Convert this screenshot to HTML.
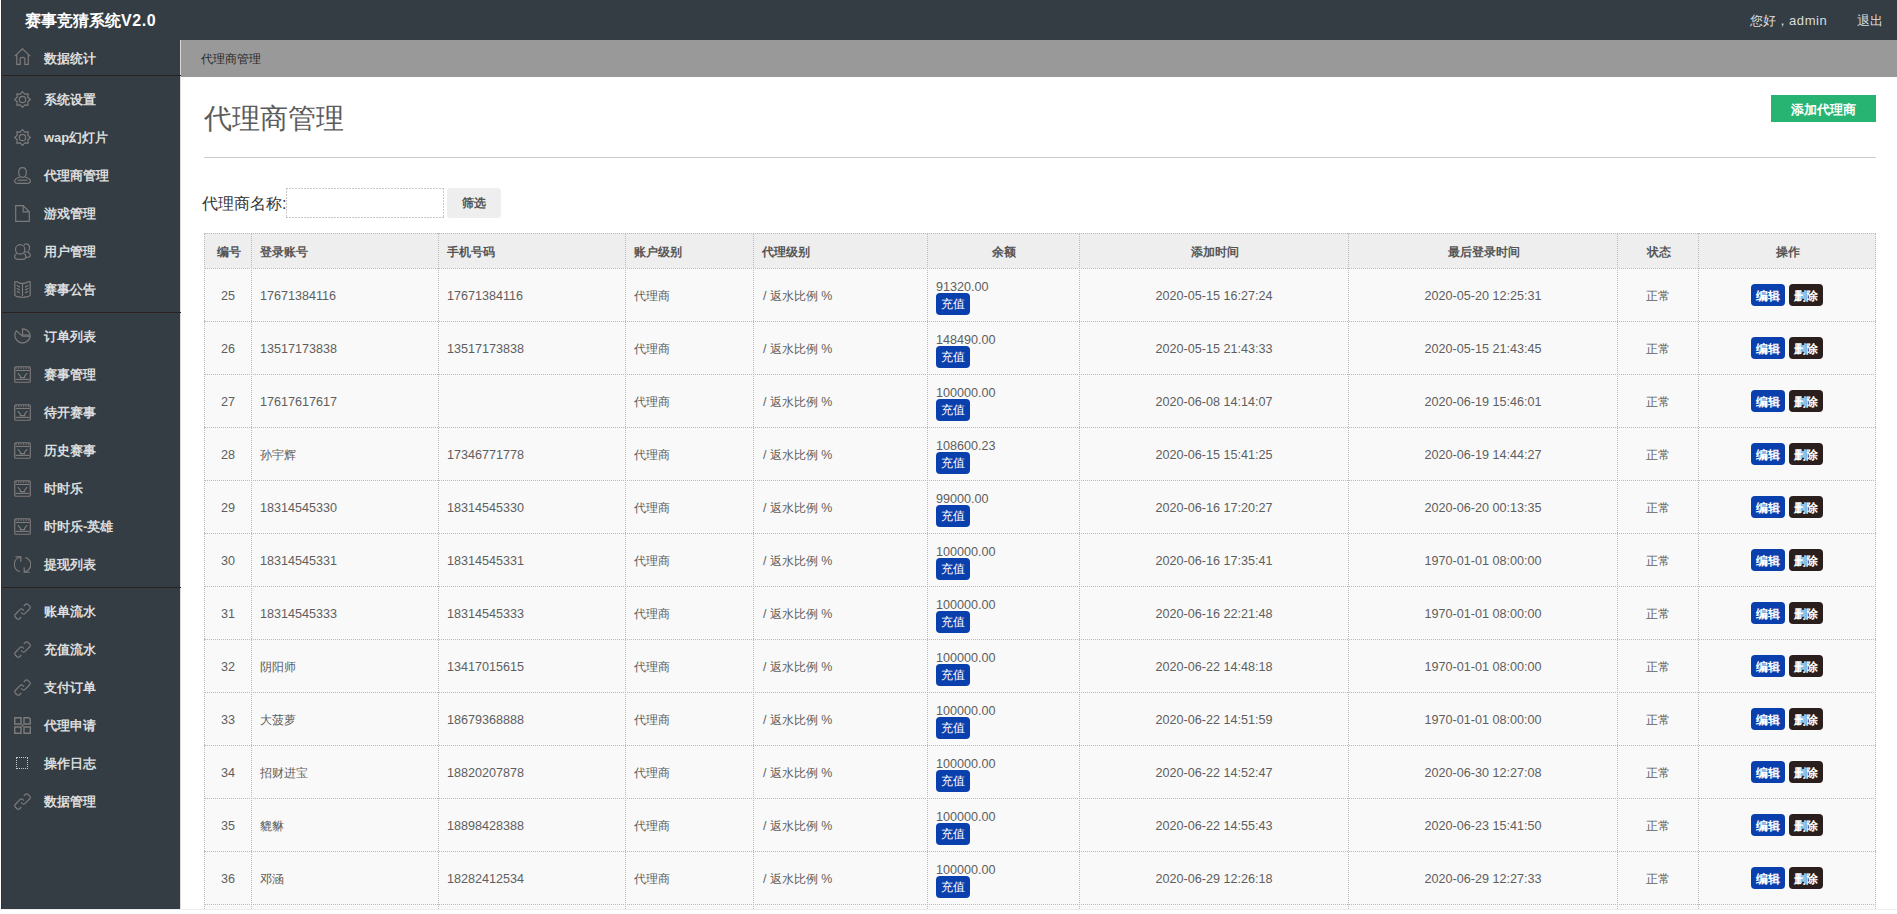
<!DOCTYPE html>
<html><head><meta charset="utf-8">
<style>
*{box-sizing:border-box}
html,body{margin:0;padding:0}
body{width:1897px;height:914px;overflow:hidden;background:#fff;position:relative;font-family:"Liberation Sans",sans-serif;}
#frame{position:absolute;left:0;top:0;width:1897px;height:909px;overflow:hidden;background:#fff}
#leftwhite{position:absolute;left:0;top:0;width:1px;height:914px;background:#fff;z-index:9}
#leftdark{position:absolute;left:1px;top:0;width:1px;height:909px;background:#2a3338;z-index:9}
#bottomline{position:absolute;left:0;top:909px;width:1897px;height:1px;background:#eee}
#top{position:absolute;left:0;top:0;width:1897px;height:40px;background:#343d44}
#logo{position:absolute;left:25px;top:10px;font-size:16px;font-weight:bold;color:#fff;line-height:22px;white-space:nowrap}
#hello{position:absolute;left:1750px;top:12px;font-size:13px;color:#ddd;line-height:18px;white-space:nowrap}
#logout{position:absolute;left:1857px;top:12px;font-size:13px;color:#ddd;line-height:18px;white-space:nowrap}
#side{position:absolute;left:0;top:40px;width:180px;height:869px;background:#343d44}
#side .sep{position:absolute;left:0;width:181px;height:1px;background:#2b2220;z-index:3}
#side .it{position:absolute;left:0;width:179px;height:38px}
#side .it span{position:absolute;left:44px;top:11px;font-size:13px;font-weight:bold;color:#ddd;line-height:18px;white-space:nowrap}
#side .it svg{position:absolute;width:17px;height:17px}
#side .dotsq{position:absolute;left:16px;top:13px;width:12px;height:12px;border:1px dotted #c8c8c8}
#vline{position:absolute;left:180px;top:40px;width:1px;height:869px;background:#dedad6;z-index:2}
#crumb{position:absolute;left:181px;top:40px;width:1716px;height:37px;background:#999}
#crumb span{position:absolute;left:20px;top:11px;font-size:12px;color:#2b2b2b;line-height:17px;white-space:nowrap}
#main{position:absolute;left:181px;top:77px;width:1716px;height:832px;background:#fff}
#title{position:absolute;left:23px;top:24px;font-size:28px;font-weight:350;color:#5c5c5c;line-height:36px;white-space:nowrap}
#hr{position:absolute;left:23px;top:80px;width:1672px;height:1px;background:#ccc}
#addbtn{position:absolute;left:1590px;top:18px;width:105px;height:27px;background:#27b473;color:#fff;font-size:13px;font-weight:bold;line-height:29px;text-align:center}
#flabel{position:absolute;left:21px;top:116px;font-size:16px;color:#333;line-height:22px;white-space:nowrap}
#finput{position:absolute;left:105px;top:111px;width:158px;height:30px;background:#fff}
#finput i{position:absolute;display:block}
#finput .bt,#finput .bb{left:0;width:158px;height:1px;background:repeating-linear-gradient(90deg,#c8c8c8 0 2px,transparent 2px 3px)}
#finput .bt{top:0}#finput .bb{bottom:0}
#finput .bl,#finput .br{top:0;width:1px;height:30px;background:repeating-linear-gradient(180deg,#c8c8c8 0 2px,transparent 2px 3px)}
#finput .bl{left:0}#finput .br{right:0}
#fbtn{position:absolute;left:266px;top:111px;width:54px;height:30px;background:#eee;border-radius:3px;color:#555;font-size:12px;font-weight:bold;line-height:30px;text-align:center}
#tbl{position:absolute;left:23px;top:156px;width:1672px;height:700px}
#tbl .hrow{position:absolute;left:0;width:1672px;background:#eee}
#tbl .brow{position:absolute;left:0;width:1672px;background:#f9f9f9}
#tbl .th,#tbl .td{position:absolute;white-space:nowrap;font-size:12px;color:#555}
#tbl .td{color:#5e5e5e}
#tbl .th{font-weight:bold;line-height:38px;padding-left:1px}
#tbl .td{line-height:56px;font-size:12.6px}
#tbl .cj{font-size:12px}
#tbl .l{padding-left:9px}
#tbl .c{text-align:center}
#tbl .bal{padding-left:9px}
#tbl .amt{position:absolute;left:9px;top:11px;line-height:17px}
#tbl .cz{position:absolute;left:9px;top:25px;width:34px;height:22px;background:#0a3fae;border-radius:4px;color:#fff;font-size:12px;font-weight:500;line-height:22px;text-align:center}
#tbl .ops{line-height:52px}
#tbl .ops span{display:inline-block;vertical-align:middle;width:34px;height:22px;border-radius:4px;color:#fff;font-size:12px;font-weight:bold;line-height:24px;text-align:center;margin:0 2px}
#tbl .eb{background:#0a3fae}
#tbl .db{background:#2a1f1d}
#tbl .hl{position:absolute;left:0;height:1px;border-top:1px dotted #bdb9b6}
#tbl .vl{position:absolute;top:0;width:1px;height:700px;border-left:1px dotted #bdb9b6}

#tbl .fs{font-size:12.45px;padding-left:10px}

</style></head>
<body>
<div id="frame">
 <div id="top"><div id="logo">赛事竞猜系统<span style="letter-spacing:0.6px">V2.0</span></div><div id="hello">您好，<span style="letter-spacing:0.6px">admin</span></div><div id="logout">退出</div></div>
 <div id="side">
  <div class="sep" style="top:35px"></div>
  <div class="sep" style="top:272px"></div>
  <div class="sep" style="top:547px"></div>
  <div class="it" style="top:-1px"><svg style="left:14px;top:9px" viewBox="0 0 16 16" fill="none" stroke="#7e7b7c" stroke-width="1.1"><path d="M0.8 7.6 L8 0.8 L15.2 7.6"/><path d="M2.6 6.2 V15.4 H5.8 V10.2 Q5.8 8.8 8 8.8 Q10.2 8.8 10.2 10.2 V15.4 H13.4 V6.2"/></svg><span>数据统计</span></div>
  <div class="it" style="top:40px"><svg style="left:14px;top:11px" viewBox="0 0 16 16" fill="none" stroke="#7e7b7c" stroke-width="1.1"><path d="M8 0.6 L10.2 3 L13.3 2.7 L13 5.8 L15.4 8 L13 10.2 L13.3 13.3 L10.2 13 L8 15.4 L5.8 13 L2.7 13.3 L3 10.2 L0.6 8 L3 5.8 L2.7 2.7 L5.8 3 Z"/><circle cx="8" cy="8" r="3"/></svg><span>系统设置</span></div>
  <div class="it" style="top:78px"><svg style="left:14px;top:11px" viewBox="0 0 16 16" fill="none" stroke="#7e7b7c" stroke-width="1.1"><path d="M8 0.6 L10.2 3 L13.3 2.7 L13 5.8 L15.4 8 L13 10.2 L13.3 13.3 L10.2 13 L8 15.4 L5.8 13 L2.7 13.3 L3 10.2 L0.6 8 L3 5.8 L2.7 2.7 L5.8 3 Z"/><circle cx="8" cy="8" r="3"/></svg><span>wap幻灯片</span></div>
  <div class="it" style="top:116px"><svg style="left:14px;top:11px" viewBox="0 0 16 16" fill="none" stroke="#7e7b7c" stroke-width="1.1"><path d="M8 0.6 C5.6 0.6 4.4 2.5 4.4 5 C4.4 7.6 5.8 9.8 8 9.8 C10.2 9.8 11.6 7.6 11.6 5 C11.6 2.5 10.4 0.6 8 0.6 Z"/><path d="M5.4 9.6 C2.6 10.2 0.6 11.6 0.6 13.2 C0.6 14.6 2 15.4 4 15.4 H12 C14 15.4 15.4 14.6 15.4 13.2 C15.4 11.6 13.4 10.2 10.6 9.6"/><path d="M3.5 12.4 H12.5"/></svg><span>代理商管理</span></div>
  <div class="it" style="top:154px"><svg style="left:14px;top:11px" viewBox="0 0 16 16" fill="none" stroke="#7e7b7c" stroke-width="1.1"><path d="M1.6 0.6 H8.6 L14.4 6.4 V15.4 H1.6 Z"/><path d="M8.6 0.6 V6.4 H14.4"/></svg><span>游戏管理</span></div>
  <div class="it" style="top:192px"><svg style="left:14px;top:11px" viewBox="0 0 16 16" fill="none" stroke="#7e7b7c" stroke-width="1.1"><circle cx="5.8" cy="6" r="4.4"/><path d="M2.8 9.6 C1.4 10.4 0.6 11.6 0.6 13 C0.6 14.6 2 15.4 4 15.4 H8.4 C10.4 15.4 11.2 14.4 11.2 13 C11.2 11.6 10.4 10.4 9 9.6"/><path d="M9.4 2.2 C9.9 1.2 10.8 0.8 11.6 0.8 C13.3 0.8 14.6 2.4 14.6 4.6 C14.6 6.8 13.3 8.6 11.6 8.6 C10.8 8.6 10.2 8.3 9.8 7.8"/><path d="M13.2 8.8 C14.6 9.6 15.4 10.4 15.4 11.6 C15.4 12.8 14.6 13.6 12.4 13.6 H11"/></svg><span>用户管理</span></div>
  <div class="it" style="top:230px"><svg style="left:14px;top:11px" viewBox="0 0 16 16" fill="none" stroke="#7e7b7c" stroke-width="1.1"><path d="M0.8 0.8 H3.2 L5.6 2.2 H10.4 L12.8 0.8 H15.2 V13.6 L12.8 15 H10.4 L8.8 15.8 H7.2 L5.6 15 H3.2 L0.8 13.6 Z"/><path d="M8 2.6 V14.8"/><path d="M2.6 4 L5.6 5.8 M2.6 6.8 L5.6 8.6 M2.6 9.6 L5.6 11.4 M13.4 4 L10.4 5.8 M13.4 6.8 L10.4 8.6 M13.4 9.6 L10.4 11.4"/></svg><span>赛事公告</span></div>
  <div class="it" style="top:277px"><svg style="left:14px;top:11px" viewBox="0 0 16 16" fill="none" stroke="#7e7b7c" stroke-width="1.1"><path d="M2.2 2.6 A7.2 7.2 0 1 0 15.2 7.6 H8 Z"/><path d="M8 0.8 A7.2 7.2 0 0 1 15.2 6.6 H8 Z"/></svg><span>订单列表</span></div>
  <div class="it" style="top:315px"><svg style="left:14px;top:11px" viewBox="0 0 16 16" fill="none" stroke="#7e7b7c" stroke-width="1.1"><rect x="0.7" y="0.7" width="14.6" height="14.6" rx="1"/><path d="M1.5 4.2 H14.5"/><path d="M2 1.2 V2.6 M4.3 1.2 V2.6 M6.6 1.2 V2.6 M9 1.2 V2.6 M11.3 1.2 V2.6 M13.6 1.2 V2.6"/><path d="M3.6 6.6 L6 9.6 V11 H10 V9.6 L12.4 6.6"/><path d="M1.5 12.6 H14.5"/></svg><span>赛事管理</span></div>
  <div class="it" style="top:353px"><svg style="left:14px;top:11px" viewBox="0 0 16 16" fill="none" stroke="#7e7b7c" stroke-width="1.1"><rect x="0.7" y="0.7" width="14.6" height="14.6" rx="1"/><path d="M1.5 4.2 H14.5"/><path d="M2 1.2 V2.6 M4.3 1.2 V2.6 M6.6 1.2 V2.6 M9 1.2 V2.6 M11.3 1.2 V2.6 M13.6 1.2 V2.6"/><path d="M3.6 6.6 L6 9.6 V11 H10 V9.6 L12.4 6.6"/><path d="M1.5 12.6 H14.5"/></svg><span>待开赛事</span></div>
  <div class="it" style="top:391px"><svg style="left:14px;top:11px" viewBox="0 0 16 16" fill="none" stroke="#7e7b7c" stroke-width="1.1"><rect x="0.7" y="0.7" width="14.6" height="14.6" rx="1"/><path d="M1.5 4.2 H14.5"/><path d="M2 1.2 V2.6 M4.3 1.2 V2.6 M6.6 1.2 V2.6 M9 1.2 V2.6 M11.3 1.2 V2.6 M13.6 1.2 V2.6"/><path d="M3.6 6.6 L6 9.6 V11 H10 V9.6 L12.4 6.6"/><path d="M1.5 12.6 H14.5"/></svg><span>历史赛事</span></div>
  <div class="it" style="top:429px"><svg style="left:14px;top:11px" viewBox="0 0 16 16" fill="none" stroke="#7e7b7c" stroke-width="1.1"><rect x="0.7" y="0.7" width="14.6" height="14.6" rx="1"/><path d="M1.5 4.2 H14.5"/><path d="M2 1.2 V2.6 M4.3 1.2 V2.6 M6.6 1.2 V2.6 M9 1.2 V2.6 M11.3 1.2 V2.6 M13.6 1.2 V2.6"/><path d="M3.6 6.6 L6 9.6 V11 H10 V9.6 L12.4 6.6"/><path d="M1.5 12.6 H14.5"/></svg><span>时时乐</span></div>
  <div class="it" style="top:467px"><svg style="left:14px;top:11px" viewBox="0 0 16 16" fill="none" stroke="#7e7b7c" stroke-width="1.1"><rect x="0.7" y="0.7" width="14.6" height="14.6" rx="1"/><path d="M1.5 4.2 H14.5"/><path d="M2 1.2 V2.6 M4.3 1.2 V2.6 M6.6 1.2 V2.6 M9 1.2 V2.6 M11.3 1.2 V2.6 M13.6 1.2 V2.6"/><path d="M3.6 6.6 L6 9.6 V11 H10 V9.6 L12.4 6.6"/><path d="M1.5 12.6 H14.5"/></svg><span>时时乐-英雄</span></div>
  <div class="it" style="top:505px"><svg style="left:14px;top:11px" viewBox="0 0 16 16" fill="none" stroke="#7e7b7c" stroke-width="1.1"><path d="M10.6 1.4 A6.8 6.8 0 0 1 9.4 14.8"/><path d="M5.6 14.6 A6.8 6.8 0 0 1 6.4 1.2"/><path d="M1.4 0.9 H6.4 V5.4"/><path d="M14.6 15.1 H9.6 V10.6"/></svg><span>提现列表</span></div>
  <div class="it" style="top:552px"><svg style="left:14px;top:11px" viewBox="0 0 16 16" fill="none" stroke="#7e7b7c" stroke-width="1.1"><path d="M9.2 2.8 L10.6 1.4 Q11.8 0.4 13 1.2 L14.8 3 Q15.8 4.2 14.8 5.4 L10.4 9.8 Q9.2 11 7.8 10 L6.6 8.8"/><path d="M6.8 13.2 L5.2 14.8 Q4 15.8 2.8 14.8 L1.2 13.2 Q0.2 12 1.2 10.8 L5.6 6.2 Q6.8 5 8.2 6 L9.4 7.2"/></svg><span>账单流水</span></div>
  <div class="it" style="top:590px"><svg style="left:14px;top:11px" viewBox="0 0 16 16" fill="none" stroke="#7e7b7c" stroke-width="1.1"><path d="M9.2 2.8 L10.6 1.4 Q11.8 0.4 13 1.2 L14.8 3 Q15.8 4.2 14.8 5.4 L10.4 9.8 Q9.2 11 7.8 10 L6.6 8.8"/><path d="M6.8 13.2 L5.2 14.8 Q4 15.8 2.8 14.8 L1.2 13.2 Q0.2 12 1.2 10.8 L5.6 6.2 Q6.8 5 8.2 6 L9.4 7.2"/></svg><span>充值流水</span></div>
  <div class="it" style="top:628px"><svg style="left:14px;top:11px" viewBox="0 0 16 16" fill="none" stroke="#7e7b7c" stroke-width="1.1"><path d="M9.2 2.8 L10.6 1.4 Q11.8 0.4 13 1.2 L14.8 3 Q15.8 4.2 14.8 5.4 L10.4 9.8 Q9.2 11 7.8 10 L6.6 8.8"/><path d="M6.8 13.2 L5.2 14.8 Q4 15.8 2.8 14.8 L1.2 13.2 Q0.2 12 1.2 10.8 L5.6 6.2 Q6.8 5 8.2 6 L9.4 7.2"/></svg><span>支付订单</span></div>
  <div class="it" style="top:666px"><svg style="left:14px;top:11px" viewBox="0 0 16 16" fill="none" stroke="#7e7b7c" stroke-width="1.1"><path d="M0.7 0.7 H6.6 V6.6 H0.7 Z M9.4 0.7 H14 L15.3 2 V6.6 H9.4 Z M0.7 9.4 H6.6 V15.3 H0.7 Z M9.4 9.4 H15.3 V15.3 H9.4 Z" stroke-width="1.3"/><path d="M8 7 V9 M7 8 H9" stroke-width="0.9"/></svg><span>代理申请</span></div>
  <div class="it" style="top:704px"><div class="dotsq"></div><span>操作日志</span></div>
  <div class="it" style="top:742px"><svg style="left:14px;top:11px" viewBox="0 0 16 16" fill="none" stroke="#7e7b7c" stroke-width="1.1"><path d="M9.2 2.8 L10.6 1.4 Q11.8 0.4 13 1.2 L14.8 3 Q15.8 4.2 14.8 5.4 L10.4 9.8 Q9.2 11 7.8 10 L6.6 8.8"/><path d="M6.8 13.2 L5.2 14.8 Q4 15.8 2.8 14.8 L1.2 13.2 Q0.2 12 1.2 10.8 L5.6 6.2 Q6.8 5 8.2 6 L9.4 7.2"/></svg><span>数据管理</span></div>
 </div>
 <div id="vline"></div>
 <div id="crumb"><span>代理商管理</span></div>
 <div id="main">
  <div id="title">代理商管理</div>
  <div id="hr"></div>
  <div id="addbtn">添加代理商</div>
  <div id="flabel">代理商名称:</div><div id="finput"><i class="bt"></i><i class="bb"></i><i class="bl"></i><i class="br"></i></div><div id="fbtn">筛选</div>
  <div id="tbl">
   <div class="hrow" style="top:0;height:36px"></div>
   <div class="th c" style="left:0px;top:0;width:48px;height:36px">编号</div>
   <div class="th l" style="left:47px;top:0;width:188px;height:36px">登录账号</div>
   <div class="th l" style="left:234px;top:0;width:188px;height:36px">手机号码</div>
   <div class="th l" style="left:421px;top:0;width:129px;height:36px">账户级别</div>
   <div class="th l" style="left:549px;top:0;width:175px;height:36px">代理级别</div>
   <div class="th c" style="left:723px;top:0;width:153px;height:36px">余额</div>
   <div class="th c" style="left:875px;top:0;width:270px;height:36px">添加时间</div>
   <div class="th c" style="left:1144px;top:0;width:270px;height:36px">最后登录时间</div>
   <div class="th c" style="left:1413px;top:0;width:82px;height:36px">状态</div>
   <div class="th c" style="left:1494px;top:0;width:178px;height:36px">操作</div>
   <div class="brow" style="top:35px;height:54px"></div>
   <div class="td c" style="left:0px;top:35px;width:48px;height:54px">25</div>
   <div class="td l" style="left:47px;top:35px;width:188px;height:54px">17671384116</div>
   <div class="td l" style="left:234px;top:35px;width:188px;height:54px">17671384116</div>
   <div class="td l cj" style="left:421px;top:35px;width:129px;height:54px">代理商</div>
   <div class="td l fs" style="left:549px;top:35px;width:175px;height:54px">/ 返水比例 %</div>
   <div class="td bal" style="left:723px;top:35px;width:153px;height:54px"><div class="amt">91320.00</div><div class="cz">充值</div></div>
   <div class="td c" style="left:875px;top:35px;width:270px;height:54px">2020-05-15 16:27:24</div>
   <div class="td c" style="left:1144px;top:35px;width:270px;height:54px">2020-05-20 12:25:31</div>
   <div class="td c cj" style="left:1413px;top:35px;width:82px;height:54px">正常</div>
   <div class="td c ops" style="left:1494px;top:35px;width:178px;height:54px"><span class="eb">编辑</span><span class="db">删除</span></div>
   <div class="brow" style="top:88px;height:54px"></div>
   <div class="td c" style="left:0px;top:88px;width:48px;height:54px">26</div>
   <div class="td l" style="left:47px;top:88px;width:188px;height:54px">13517173838</div>
   <div class="td l" style="left:234px;top:88px;width:188px;height:54px">13517173838</div>
   <div class="td l cj" style="left:421px;top:88px;width:129px;height:54px">代理商</div>
   <div class="td l fs" style="left:549px;top:88px;width:175px;height:54px">/ 返水比例 %</div>
   <div class="td bal" style="left:723px;top:88px;width:153px;height:54px"><div class="amt">148490.00</div><div class="cz">充值</div></div>
   <div class="td c" style="left:875px;top:88px;width:270px;height:54px">2020-05-15 21:43:33</div>
   <div class="td c" style="left:1144px;top:88px;width:270px;height:54px">2020-05-15 21:43:45</div>
   <div class="td c cj" style="left:1413px;top:88px;width:82px;height:54px">正常</div>
   <div class="td c ops" style="left:1494px;top:88px;width:178px;height:54px"><span class="eb">编辑</span><span class="db">删除</span></div>
   <div class="brow" style="top:141px;height:54px"></div>
   <div class="td c" style="left:0px;top:141px;width:48px;height:54px">27</div>
   <div class="td l" style="left:47px;top:141px;width:188px;height:54px">17617617617</div>
   <div class="td l" style="left:234px;top:141px;width:188px;height:54px"></div>
   <div class="td l cj" style="left:421px;top:141px;width:129px;height:54px">代理商</div>
   <div class="td l fs" style="left:549px;top:141px;width:175px;height:54px">/ 返水比例 %</div>
   <div class="td bal" style="left:723px;top:141px;width:153px;height:54px"><div class="amt">100000.00</div><div class="cz">充值</div></div>
   <div class="td c" style="left:875px;top:141px;width:270px;height:54px">2020-06-08 14:14:07</div>
   <div class="td c" style="left:1144px;top:141px;width:270px;height:54px">2020-06-19 15:46:01</div>
   <div class="td c cj" style="left:1413px;top:141px;width:82px;height:54px">正常</div>
   <div class="td c ops" style="left:1494px;top:141px;width:178px;height:54px"><span class="eb">编辑</span><span class="db">删除</span></div>
   <div class="brow" style="top:194px;height:54px"></div>
   <div class="td c" style="left:0px;top:194px;width:48px;height:54px">28</div>
   <div class="td l cj" style="left:47px;top:194px;width:188px;height:54px">孙宇辉</div>
   <div class="td l" style="left:234px;top:194px;width:188px;height:54px">17346771778</div>
   <div class="td l cj" style="left:421px;top:194px;width:129px;height:54px">代理商</div>
   <div class="td l fs" style="left:549px;top:194px;width:175px;height:54px">/ 返水比例 %</div>
   <div class="td bal" style="left:723px;top:194px;width:153px;height:54px"><div class="amt">108600.23</div><div class="cz">充值</div></div>
   <div class="td c" style="left:875px;top:194px;width:270px;height:54px">2020-06-15 15:41:25</div>
   <div class="td c" style="left:1144px;top:194px;width:270px;height:54px">2020-06-19 14:44:27</div>
   <div class="td c cj" style="left:1413px;top:194px;width:82px;height:54px">正常</div>
   <div class="td c ops" style="left:1494px;top:194px;width:178px;height:54px"><span class="eb">编辑</span><span class="db">删除</span></div>
   <div class="brow" style="top:247px;height:54px"></div>
   <div class="td c" style="left:0px;top:247px;width:48px;height:54px">29</div>
   <div class="td l" style="left:47px;top:247px;width:188px;height:54px">18314545330</div>
   <div class="td l" style="left:234px;top:247px;width:188px;height:54px">18314545330</div>
   <div class="td l cj" style="left:421px;top:247px;width:129px;height:54px">代理商</div>
   <div class="td l fs" style="left:549px;top:247px;width:175px;height:54px">/ 返水比例 %</div>
   <div class="td bal" style="left:723px;top:247px;width:153px;height:54px"><div class="amt">99000.00</div><div class="cz">充值</div></div>
   <div class="td c" style="left:875px;top:247px;width:270px;height:54px">2020-06-16 17:20:27</div>
   <div class="td c" style="left:1144px;top:247px;width:270px;height:54px">2020-06-20 00:13:35</div>
   <div class="td c cj" style="left:1413px;top:247px;width:82px;height:54px">正常</div>
   <div class="td c ops" style="left:1494px;top:247px;width:178px;height:54px"><span class="eb">编辑</span><span class="db">删除</span></div>
   <div class="brow" style="top:300px;height:54px"></div>
   <div class="td c" style="left:0px;top:300px;width:48px;height:54px">30</div>
   <div class="td l" style="left:47px;top:300px;width:188px;height:54px">18314545331</div>
   <div class="td l" style="left:234px;top:300px;width:188px;height:54px">18314545331</div>
   <div class="td l cj" style="left:421px;top:300px;width:129px;height:54px">代理商</div>
   <div class="td l fs" style="left:549px;top:300px;width:175px;height:54px">/ 返水比例 %</div>
   <div class="td bal" style="left:723px;top:300px;width:153px;height:54px"><div class="amt">100000.00</div><div class="cz">充值</div></div>
   <div class="td c" style="left:875px;top:300px;width:270px;height:54px">2020-06-16 17:35:41</div>
   <div class="td c" style="left:1144px;top:300px;width:270px;height:54px">1970-01-01 08:00:00</div>
   <div class="td c cj" style="left:1413px;top:300px;width:82px;height:54px">正常</div>
   <div class="td c ops" style="left:1494px;top:300px;width:178px;height:54px"><span class="eb">编辑</span><span class="db">删除</span></div>
   <div class="brow" style="top:353px;height:54px"></div>
   <div class="td c" style="left:0px;top:353px;width:48px;height:54px">31</div>
   <div class="td l" style="left:47px;top:353px;width:188px;height:54px">18314545333</div>
   <div class="td l" style="left:234px;top:353px;width:188px;height:54px">18314545333</div>
   <div class="td l cj" style="left:421px;top:353px;width:129px;height:54px">代理商</div>
   <div class="td l fs" style="left:549px;top:353px;width:175px;height:54px">/ 返水比例 %</div>
   <div class="td bal" style="left:723px;top:353px;width:153px;height:54px"><div class="amt">100000.00</div><div class="cz">充值</div></div>
   <div class="td c" style="left:875px;top:353px;width:270px;height:54px">2020-06-16 22:21:48</div>
   <div class="td c" style="left:1144px;top:353px;width:270px;height:54px">1970-01-01 08:00:00</div>
   <div class="td c cj" style="left:1413px;top:353px;width:82px;height:54px">正常</div>
   <div class="td c ops" style="left:1494px;top:353px;width:178px;height:54px"><span class="eb">编辑</span><span class="db">删除</span></div>
   <div class="brow" style="top:406px;height:54px"></div>
   <div class="td c" style="left:0px;top:406px;width:48px;height:54px">32</div>
   <div class="td l cj" style="left:47px;top:406px;width:188px;height:54px">阴阳师</div>
   <div class="td l" style="left:234px;top:406px;width:188px;height:54px">13417015615</div>
   <div class="td l cj" style="left:421px;top:406px;width:129px;height:54px">代理商</div>
   <div class="td l fs" style="left:549px;top:406px;width:175px;height:54px">/ 返水比例 %</div>
   <div class="td bal" style="left:723px;top:406px;width:153px;height:54px"><div class="amt">100000.00</div><div class="cz">充值</div></div>
   <div class="td c" style="left:875px;top:406px;width:270px;height:54px">2020-06-22 14:48:18</div>
   <div class="td c" style="left:1144px;top:406px;width:270px;height:54px">1970-01-01 08:00:00</div>
   <div class="td c cj" style="left:1413px;top:406px;width:82px;height:54px">正常</div>
   <div class="td c ops" style="left:1494px;top:406px;width:178px;height:54px"><span class="eb">编辑</span><span class="db">删除</span></div>
   <div class="brow" style="top:459px;height:54px"></div>
   <div class="td c" style="left:0px;top:459px;width:48px;height:54px">33</div>
   <div class="td l cj" style="left:47px;top:459px;width:188px;height:54px">大菠萝</div>
   <div class="td l" style="left:234px;top:459px;width:188px;height:54px">18679368888</div>
   <div class="td l cj" style="left:421px;top:459px;width:129px;height:54px">代理商</div>
   <div class="td l fs" style="left:549px;top:459px;width:175px;height:54px">/ 返水比例 %</div>
   <div class="td bal" style="left:723px;top:459px;width:153px;height:54px"><div class="amt">100000.00</div><div class="cz">充值</div></div>
   <div class="td c" style="left:875px;top:459px;width:270px;height:54px">2020-06-22 14:51:59</div>
   <div class="td c" style="left:1144px;top:459px;width:270px;height:54px">1970-01-01 08:00:00</div>
   <div class="td c cj" style="left:1413px;top:459px;width:82px;height:54px">正常</div>
   <div class="td c ops" style="left:1494px;top:459px;width:178px;height:54px"><span class="eb">编辑</span><span class="db">删除</span></div>
   <div class="brow" style="top:512px;height:54px"></div>
   <div class="td c" style="left:0px;top:512px;width:48px;height:54px">34</div>
   <div class="td l cj" style="left:47px;top:512px;width:188px;height:54px">招财进宝</div>
   <div class="td l" style="left:234px;top:512px;width:188px;height:54px">18820207878</div>
   <div class="td l cj" style="left:421px;top:512px;width:129px;height:54px">代理商</div>
   <div class="td l fs" style="left:549px;top:512px;width:175px;height:54px">/ 返水比例 %</div>
   <div class="td bal" style="left:723px;top:512px;width:153px;height:54px"><div class="amt">100000.00</div><div class="cz">充值</div></div>
   <div class="td c" style="left:875px;top:512px;width:270px;height:54px">2020-06-22 14:52:47</div>
   <div class="td c" style="left:1144px;top:512px;width:270px;height:54px">2020-06-30 12:27:08</div>
   <div class="td c cj" style="left:1413px;top:512px;width:82px;height:54px">正常</div>
   <div class="td c ops" style="left:1494px;top:512px;width:178px;height:54px"><span class="eb">编辑</span><span class="db">删除</span></div>
   <div class="brow" style="top:565px;height:54px"></div>
   <div class="td c" style="left:0px;top:565px;width:48px;height:54px">35</div>
   <div class="td l cj" style="left:47px;top:565px;width:188px;height:54px">貔貅</div>
   <div class="td l" style="left:234px;top:565px;width:188px;height:54px">18898428388</div>
   <div class="td l cj" style="left:421px;top:565px;width:129px;height:54px">代理商</div>
   <div class="td l fs" style="left:549px;top:565px;width:175px;height:54px">/ 返水比例 %</div>
   <div class="td bal" style="left:723px;top:565px;width:153px;height:54px"><div class="amt">100000.00</div><div class="cz">充值</div></div>
   <div class="td c" style="left:875px;top:565px;width:270px;height:54px">2020-06-22 14:55:43</div>
   <div class="td c" style="left:1144px;top:565px;width:270px;height:54px">2020-06-23 15:41:50</div>
   <div class="td c cj" style="left:1413px;top:565px;width:82px;height:54px">正常</div>
   <div class="td c ops" style="left:1494px;top:565px;width:178px;height:54px"><span class="eb">编辑</span><span class="db">删除</span></div>
   <div class="brow" style="top:618px;height:54px"></div>
   <div class="td c" style="left:0px;top:618px;width:48px;height:54px">36</div>
   <div class="td l cj" style="left:47px;top:618px;width:188px;height:54px">邓涵</div>
   <div class="td l" style="left:234px;top:618px;width:188px;height:54px">18282412534</div>
   <div class="td l cj" style="left:421px;top:618px;width:129px;height:54px">代理商</div>
   <div class="td l fs" style="left:549px;top:618px;width:175px;height:54px">/ 返水比例 %</div>
   <div class="td bal" style="left:723px;top:618px;width:153px;height:54px"><div class="amt">100000.00</div><div class="cz">充值</div></div>
   <div class="td c" style="left:875px;top:618px;width:270px;height:54px">2020-06-29 12:26:18</div>
   <div class="td c" style="left:1144px;top:618px;width:270px;height:54px">2020-06-29 12:27:33</div>
   <div class="td c cj" style="left:1413px;top:618px;width:82px;height:54px">正常</div>
   <div class="td c ops" style="left:1494px;top:618px;width:178px;height:54px"><span class="eb">编辑</span><span class="db">删除</span></div>
   <div class="brow" style="top:671px;height:54px"></div>
   <div class="hl" style="top:0px;width:1672px"></div>
   <div class="hl" style="top:35px;width:1672px"></div>
   <div class="hl" style="top:88px;width:1672px"></div>
   <div class="hl" style="top:141px;width:1672px"></div>
   <div class="hl" style="top:194px;width:1672px"></div>
   <div class="hl" style="top:247px;width:1672px"></div>
   <div class="hl" style="top:300px;width:1672px"></div>
   <div class="hl" style="top:353px;width:1672px"></div>
   <div class="hl" style="top:406px;width:1672px"></div>
   <div class="hl" style="top:459px;width:1672px"></div>
   <div class="hl" style="top:512px;width:1672px"></div>
   <div class="hl" style="top:565px;width:1672px"></div>
   <div class="hl" style="top:618px;width:1672px"></div>
   <div class="hl" style="top:671px;width:1672px"></div>
   <div class="vl" style="left:0px"></div>
   <div class="vl" style="left:47px"></div>
   <div class="vl" style="left:234px"></div>
   <div class="vl" style="left:421px"></div>
   <div class="vl" style="left:549px"></div>
   <div class="vl" style="left:723px"></div>
   <div class="vl" style="left:875px"></div>
   <div class="vl" style="left:1144px"></div>
   <div class="vl" style="left:1413px"></div>
   <div class="vl" style="left:1494px"></div>
   <div class="vl" style="left:1671px"></div>
  </div>
 </div>
</div>
<div id="bottomline"></div><div id="leftwhite"></div><div id="leftdark"></div>
</body></html>
